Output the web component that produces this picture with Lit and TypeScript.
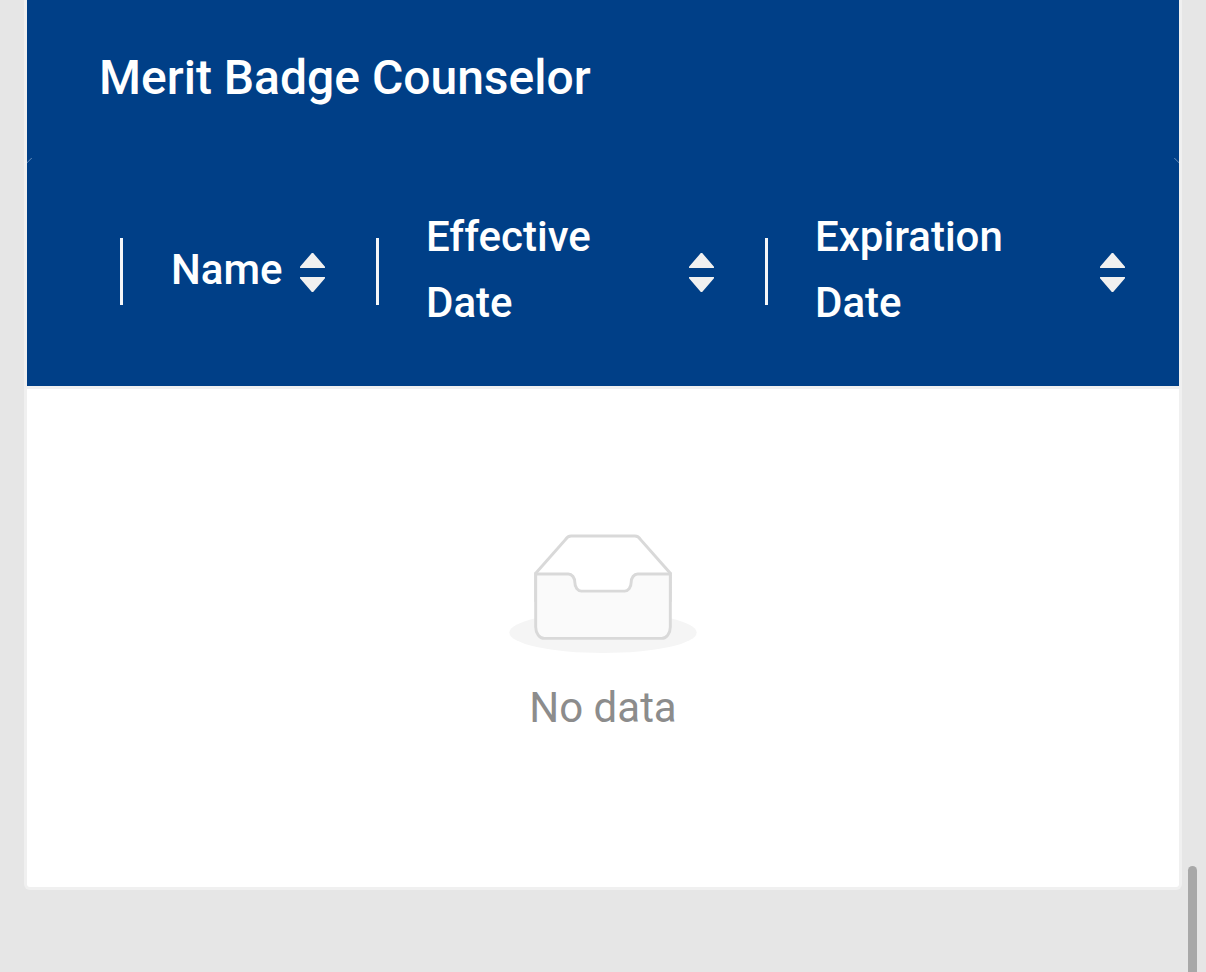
import { LitElement, html, css, svg } from "lit";
import { customElement } from "lit/decorators.js";

const UP = "M858.9 689L530.5 308.2c-9.4-10.9-27.5-10.9-37 0L165.1 689c-12.2 14.2-1.2 35 18.5 35h656.8c19.7 0 30.7-20.8 18.5-35z";
const DOWN = "M840.4 300H183.6c-19.7 0-30.7 20.8-18.5 35l328.4 380.8c9.4 10.9 27.5 10.9 37 0L858.9 335c12.2-14.2 1.2-35-18.5-35z";

@customElement("app-root")
export class AppRoot extends LitElement {
  static styles = css`
    :host {
      display: block;
      position: relative;
      height: 972px;
      overflow: hidden;
      background: #e6e6e6;
      font-family: Roboto, "Noto Sans", sans-serif;
    }
    .page {
      padding: 0 24px;
    }
    .card {
      height: 890px;
      box-sizing: border-box;
      display: flex;
      flex-direction: column;
      background: #fff;
      border: 3px solid #f0f0f0;
      border-top: 0;
      border-radius: 0 0 6px 6px;
    }
    .title {
      height: 158px;
      box-sizing: border-box;
      padding: 0 72px 2px;
      display: flex;
      align-items: center;
      background: #003f87;
      color: #fff;
      font-size: 48px;
      font-weight: 500;
      line-height: 156px;
      flex: none;
    }
    .thead {
      position: relative;
      display: grid;
      grid-template-columns: 96px 256px 389px 411px;
      height: 228px;
      flex: none;
      background: #003f87;
      border-bottom: 3px solid #f0f0f0;
      box-sizing: content-box;
    }
    .thead::before,
    .thead::after {
      content: "";
      position: absolute;
      top: 0;
      width: 6px;
      height: 6px;
    }
    .thead::before {
      left: 0;
      background: linear-gradient(135deg, transparent 30%, rgba(255, 255, 255, 0.35) 40%, transparent 50%);
    }
    .thead::after {
      right: 0;
      background: linear-gradient(225deg, transparent 30%, rgba(255, 255, 255, 0.35) 40%, transparent 50%);
    }
    .th {
      position: relative;
      display: flex;
      align-items: center;
      justify-content: space-between;
      padding: 0 54px 0 47px;
      color: #fff;
      font-size: 42px;
      font-weight: 500;
      line-height: 66px;
    }
    .th.select {
      padding: 0;
    }
    .th.name {
      padding-left: 48px;
    }
    .th::before {
      content: "";
      position: absolute;
      top: 80px;
      right: 0;
      width: 3px;
      height: 67px;
      background: #f4f6f9;
    }
    .th:last-child::before {
      display: none;
    }
    .label {
      max-width: 230px;
      margin-bottom: 4px;
    }
    .sorter {
      display: flex;
      flex-direction: column;
      flex: none;
      margin-left: 16px;
    }
    .sorter svg {
      display: block;
      width: 25px;
      height: 15px;
      fill: #f0f0f0;
    }
    .sorter svg + svg {
      margin-top: 9px;
    }
    .empty {
      flex: 1;
      display: flex;
      flex-direction: column;
      align-items: center;
      padding-top: 144px;
    }
    .empty svg {
      display: block;
      width: 188px;
      height: 120px;
    }
    .no-data {
      margin-top: 22px;
      font-size: 42px;
      line-height: 66px;
      color: #8c8c8c;
    }
    .scrollbar {
      position: absolute;
      left: 1188px;
      top: 866px;
      bottom: -20px;
      width: 9px;
      border-radius: 5px;
      background: #a8a8a8;
    }
  `;

  private sorter() {
    return html`<span class="sorter">
      <svg viewBox="165 308 694 416" preserveAspectRatio="none"><path d=${UP}></path></svg>
      <svg viewBox="165 300 694 416" preserveAspectRatio="none"><path d=${DOWN}></path></svg>
    </span>`;
  }

  render() {
    return html`
      <div class="page">
        <div class="card">
          <div class="title">Merit Badge Counselor</div>
          <div class="thead">
            <div class="th select"></div>
            <div class="th name"><span class="label">Name</span>${this.sorter()}</div>
            <div class="th"><span class="label">Effective Date</span>${this.sorter()}</div>
            <div class="th"><span class="label">Expiration Date</span>${this.sorter()}</div>
          </div>
          <div class="empty">
            <svg viewBox="0 0 64 41">
              ${svg`<g transform="translate(0 1)" fill="none" fill-rule="evenodd">
                <ellipse fill="#f5f5f5" cx="32" cy="33" rx="32" ry="7"></ellipse>
                <g fill-rule="nonzero" stroke="#d9d9d9">
                  <path d="M55 12.76L44.854 1.258C44.367.474 43.656 0 42.907 0H21.093c-.749 0-1.46.474-1.947 1.257L9 12.761V22h46v-9.24z"></path>
                  <path d="M41.613 15.931c0-1.605.994-2.93 2.227-2.931H55v18.137C55 33.26 53.68 35 52.05 35h-40.1C10.32 35 9 33.259 9 31.137V13h11.16c1.233 0 2.227 1.323 2.227 2.928v.022c0 1.605 1.005 2.901 2.237 2.901h14.752c1.232 0 2.237-1.308 2.237-2.913v-.007z" fill="#fafafa"></path>
                </g>
              </g>`}
            </svg>
            <div class="no-data">No data</div>
          </div>
        </div>
      </div>
      <div class="scrollbar"></div>
    `;
  }
}
